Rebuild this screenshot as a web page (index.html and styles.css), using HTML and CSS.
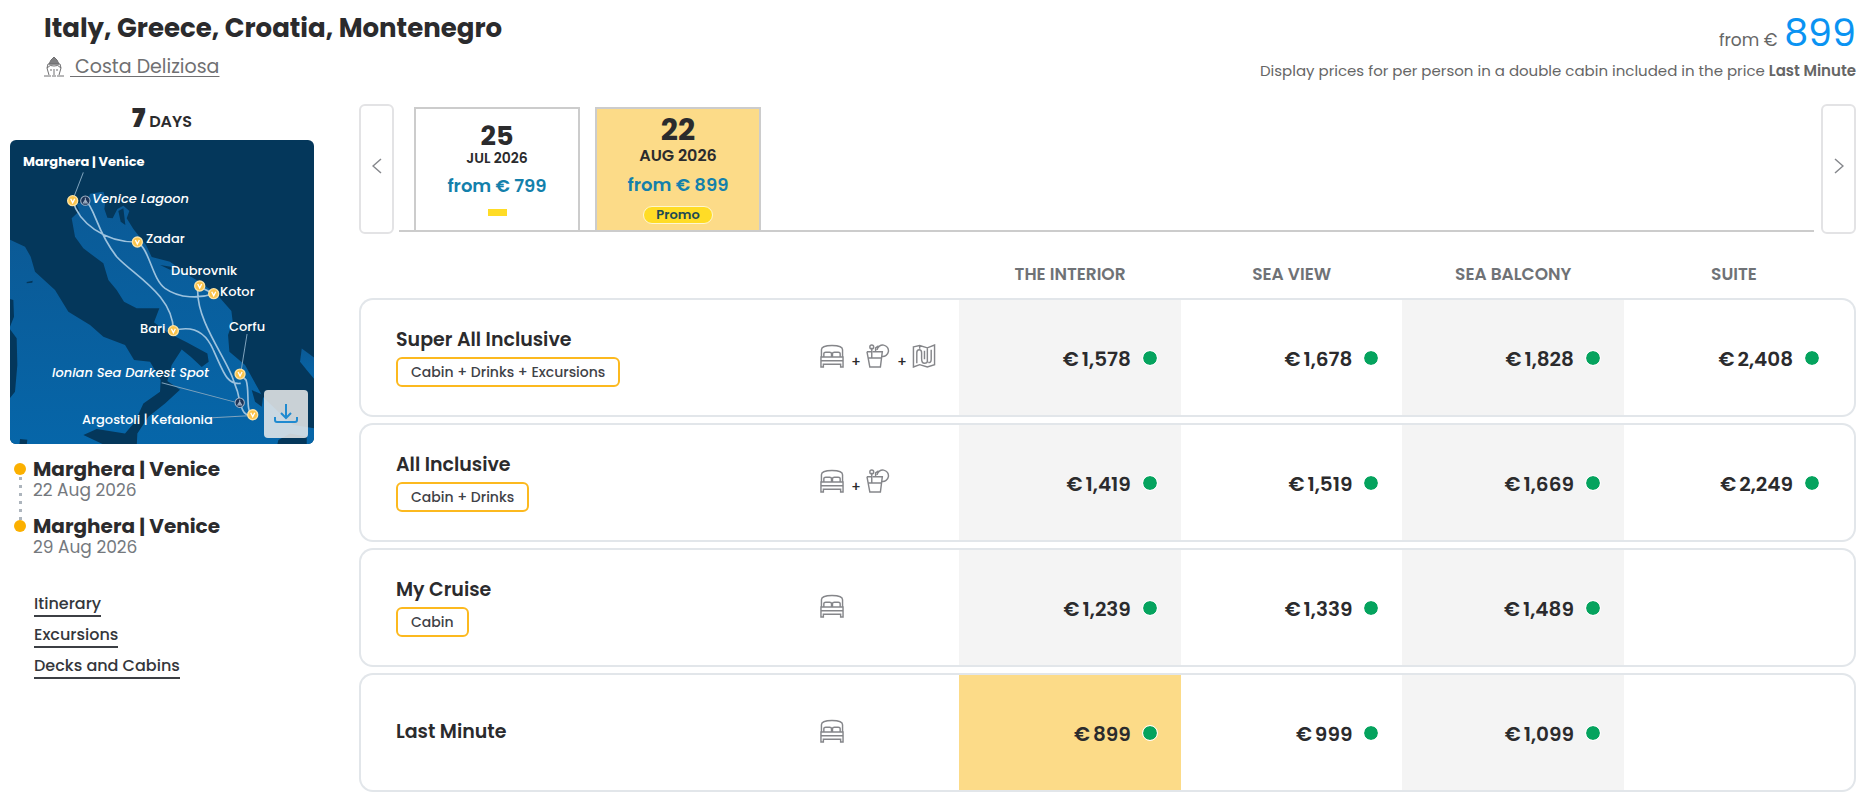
FILE: index.html
```html
<!DOCTYPE html>
<html lang="en">
<head>
  <meta charset="UTF-8" />
  <title>Italy, Greece, Croatia, Montenegro - Costa Deliziosa</title>
  <meta name="viewport" content="width=device-width, initial-scale=1.0" />
  <link rel="stylesheet" href="styles.css">
</head>
<body>

  <!-- Shared icons -->
  <svg class="sprite" aria-hidden="true">
    <symbol id="icon-bed" viewBox="0 0 25 25">
      <path d="M1.5 13V6C1.5 2.5 6 1.5 12.5 1.5S23.5 2.5 23.5 6V13M4 13V10Q4 8.500 6 8.500H10Q12 8.500 12 10V13M13 13V10Q13 8.500 15 8.500H19Q21 8.500 21 10V13M1 13.5H24V24H21.5V21H3.5V24H1ZM1 17.5H24"/>
    </symbol>
    <symbol id="icon-drink" viewBox="0 0 25 25">
      <path d="M1 8H6M7 8H17L15 24H4L1 8M2.500 14.5H16M6 14V4M10 8V4L13 2M4 3A2 2 0 1 0 8 3A2 2 0 1 0 4 3M11.5 6A6 6 0 1 1 16.5 13"/>
    </symbol>
    <symbol id="icon-map" viewBox="0 0 25 25">
      <path d="M1.5 3L8 1.5L16 4L23.5 1V21.5L16 24L8 21.5L1.5 24ZM8 2V5M16 4V18M5 20V9Q5 6 7.500 6T10 9V15Q10 20 13 20T16 18M20 6V16Q20 20 17 19M13 7V16"/>
    </symbol>
  </svg>

  <header class="header">
    <div>
      <h1 class="title">Italy, Greece, Croatia, Montenegro</h1>
      <div class="ship">
        <svg class="ship-icon" viewBox="0 0 20 20" aria-hidden="true">
          <path class="ship-top" d="M5 7L7 3L10 0L13 3L15 7Z"/>
          <path d="M3 11L4 7H16L17 11M3 11Q6 7 10 9Q14 7 17 11L15 18M3 11L5 18M7 12V14M13 12V14M10 12V18M0 19H7M8 19H12M13 19H20"/>
        </svg>
        <a href="#ship">&nbsp;Costa Deliziosa</a>
      </div>
    </div>
    <div class="from">
      <div class="from-price">from € <span>899</span></div>
      <div class="from-note">Display prices for per person in a double cabin included in the price <b>Last Minute</b></div>
    </div>
  </header>

  <div class="content">

    <!-- Left: itinerary map, ports, links -->
    <aside class="side">
      <div class="days"><b>7</b> DAYS</div>

      <div class="map">
        <svg class="map-image" viewBox="0 0 304 304" role="img" aria-label="Itinerary map">
          <defs>
            <linearGradient id="water" x1="0" y1="0" x2="0" y2="1">
              <stop offset="0" stop-color="#0b5a96"/>
              <stop offset="1" stop-color="#0666a9"/>
            </linearGradient>
          </defs>
          <g transform="translate(-10 -5) scale(.3334)">
            <g fill="url(#water)">
              <path d="M215 250L238 228L228 205L262 200L270 176L310 170L317 190L313 222L322 248L338 250L352 222L370 212L388 228L380 250L400 282L438 330L455 366L510 380L560 418L598 440L650 478L694 528L698 560L684 600L688 650L735 690L760 735L788 785L835 830L880 870L945 880V935H410L412 895L445 845L495 805L540 764L502 738L515 690L545 643L572 665L605 696L626 680L622 655L560 622L500 592L462 562L478 520L410 520L372 500L350 465L325 435L310 385L250 340L225 305Z"/>
              <path d="M25 312L75 335L92 365L105 410L165 465L205 530L270 570L310 605L375 630L402 675L450 680L482 735L480 770L430 805L405 860L375 895L290 882L250 900L325 935H25Z"/>
              <path d="M905 640L945 670V735L920 705L900 680Z"/>
            </g>
            <g fill="#04375b">
              <path d="M25 490L40 495L42 545L28 580L50 610L52 690L45 770L25 795Z"/>
              <path d="M60 912L82 914L80 930H58ZM755 765L790 780L785 815L765 800ZM835 915L870 895L920 905V935H830ZM480 390L540 400L510 404ZM355 228L370 220L376 270L362 260Z"/>
              <path d="M80 441L98 437L97 443L80 445Z"/>
            </g>
            <path class="route" d="M218 196C235 260 310 322 412 321C450 345 455 430 495 460C540 492 600 490 641 476L598 455M257 196C285 220 290 290 350 365C400 420 520 480 520 587C560 575 610 575 640 645C670 710 680 750 722 745M593 465C590 560 680 670 700 735C715 770 718 790 720 803C728 830 735 845 758 840C735 830 750 770 738 735L720 717"/>
            <path class="pointer" d="M250 112L222 185M741 597L724 702M485 743L708 802M637 848L745 842"/>
            <g class="stop">
              <circle cx="218" cy="197" r="15"/><circle cx="412" cy="321" r="15"/><circle cx="599" cy="453" r="15"/><circle cx="641" cy="476" r="15"/>
              <circle cx="520" cy="587" r="15"/><circle cx="720" cy="717" r="15"/><circle cx="758" cy="839" r="15"/>
            </g>
            <path class="stop-mark" d="M212 191L218 203L224 191M406 315L412 327L418 315M593 447L599 459L605 447M635 470L641 482L647 470M514 581L520 593L526 581M714 711L720 723L726 711M752 833L758 845L764 833"/>
            <g class="sight">
              <circle cx="256" cy="197" r="14"/><circle cx="719" cy="803" r="14"/>
              <path d="M256 188V204M250 204H262L256 194ZM719 794V810M713 810H725L719 800Z"/>
            </g>
          </g>
          <g class="map-label">
            <text class="port" x="13" y="26">Marghera | Venice</text>
            <text class="sea" x="82" y="63">Venice Lagoon</text>
            <text x="136" y="103">Zadar</text>
            <text x="161" y="135">Dubrovnik</text>
            <text x="210" y="156">Kotor</text>
            <text x="130" y="193">Bari</text>
            <text x="219" y="191">Corfu</text>
            <text class="sea" x="42" y="237">Ionian Sea Darkest Spot</text>
            <text x="72" y="284">Argostoli | Kefalonia</text>
          </g>
        </svg>
        <button class="download" aria-label="Download map">
          <svg viewBox="0 0 24 24" aria-hidden="true"><path d="M12 2V16M7 11L12 16L17 11M1 15V18Q1 20 3 20H21Q23 20 23 18V15"/></svg>
        </button>
      </div>

      <ul class="ports">
        <li><b>Marghera | Venice</b><span>22 Aug 2026</span></li>
        <li><b>Marghera | Venice</b><span>29 Aug 2026</span></li>
      </ul>

      <nav class="links">
        <a href="#itinerary">Itinerary</a>
        <a href="#excursions">Excursions</a>
        <a href="#decks">Decks and Cabins</a>
      </nav>
    </aside>

    <!-- Right: departures and prices -->
    <main class="main">
      <div class="dates">
        <button class="arrow" aria-label="Previous dates"><svg viewBox="0 0 10 16" aria-hidden="true"><path d="M9 1L1 8L9 15"/></svg></button>
        <div class="date-list">
          <button class="date">
            <span class="day">25</span>
            <span class="month">JUL 2026</span>
            <span class="price-from">from € 799</span>
            <span class="dash"></span>
          </button>
          <button class="date active">
            <span class="day">22</span>
            <span class="month">AUG 2026</span>
            <span class="price-from">from € 899</span>
            <span class="promo">Promo</span>
          </button>
        </div>
        <button class="arrow" aria-label="Next dates"><svg viewBox="0 0 10 16" aria-hidden="true"><path d="M1 1L9 8L1 15"/></svg></button>
      </div>

      <table class="prices">
        <thead>
          <tr>
            <td class="col-name"></td>
            <td class="col-icons"></td>
            <th scope="col">THE INTERIOR</th>
            <th scope="col">SEA VIEW</th>
            <th scope="col">SEA BALCONY</th>
            <th scope="col" class="col-last">SUITE</th>
          </tr>
        </thead>
        <tbody>
          <tr>
            <th scope="row">Super All Inclusive<br><span class="tag">Cabin + Drinks + Excursions</span></th>
            <td class="icons"><div><svg><use href="#icon-bed"/></svg><i>+</i><svg><use href="#icon-drink"/></svg><i>+</i><svg><use href="#icon-map"/></svg></div></td>
            <td class="price"><span>€</span>1,578</td>
            <td class="price"><span>€</span>1,678</td>
            <td class="price"><span>€</span>1,828</td>
            <td class="price"><span>€</span>2,408</td>
          </tr>
          <tr>
            <th scope="row">All Inclusive<br><span class="tag">Cabin + Drinks</span></th>
            <td class="icons"><div><svg><use href="#icon-bed"/></svg><i>+</i><svg><use href="#icon-drink"/></svg></div></td>
            <td class="price"><span>€</span>1,419</td>
            <td class="price"><span>€</span>1,519</td>
            <td class="price"><span>€</span>1,669</td>
            <td class="price"><span>€</span>2,249</td>
          </tr>
          <tr>
            <th scope="row">My Cruise<br><span class="tag">Cabin</span></th>
            <td class="icons"><div><svg><use href="#icon-bed"/></svg></div></td>
            <td class="price"><span>€</span>1,239</td>
            <td class="price"><span>€</span>1,339</td>
            <td class="price"><span>€</span>1,489</td>
            <td></td>
          </tr>
          <tr>
            <th scope="row">Last Minute</th>
            <td class="icons"><div><svg><use href="#icon-bed"/></svg></div></td>
            <td class="price best"><span>€</span>899</td>
            <td class="price"><span>€</span>999</td>
            <td class="price"><span>€</span>1,099</td>
            <td></td>
          </tr>
        </tbody>
      </table>
    </main>

  </div>

</body>
</html>
```
FILE: styles.css
```css
* {
  box-sizing: border-box;
}

body {
  margin: 0;
  padding: 12px 14px 2px 10px;
  background: #fff;
  color: #2b2b2d;
  font-family: Poppins, Inter, sans-serif;
}

button {
  font-family: inherit;
  color: inherit;
  cursor: pointer;
}

.sprite {
  display: none;
}

.header {
  display: flex;
  justify-content: space-between;
  padding-left: 34px;
}

.title {
  margin: 0;
  font-size: 26px;
  line-height: 32px;
  font-weight: 700;
}

.ship {
  display: flex;
  align-items: center;
  gap: 6px;
  margin-top: 9px;
  font-size: 19px;
  line-height: 28px;
}

.ship a {
  color: #707072;
  text-underline-offset: 3px;
}

.ship-icon {
  width: 20px;
  height: 20px;
  fill: none;
  stroke: #707072;
}

.ship-top {
  fill: #808082;
}

.from {
  text-align: right;
  color: #666;
}

.from-price {
  font-size: 17px;
  line-height: 28px;
}

.from-price span {
  margin-left: 2px;
  font-size: 38px;
  line-height: 42px;
  color: #0a93f2;
}

.from-note {
  margin-top: 6px;
  font-size: 15px;
  line-height: 22px;
}

.from-note b {
  font-weight: 600;
}

.content {
  display: flex;
  gap: 45px;
  margin-top: 22px;
}

/* side column */
.side {
  flex: 0 0 304px;
}

.days {
  font-size: 16px;
  line-height: 36px;
  font-weight: 600;
  text-align: center;
}

.days b {
  font-size: 26px;
  line-height: 28px;
}

.map {
  position: relative;
}

.map-image {
  display: block;
  width: 100%;
  border-radius: 6px;
  background: #04375b;
}

.route {
  fill: none;
  stroke: #9cc2de;
  stroke-width: 5;
}

.pointer {
  fill: none;
  stroke: #7fa3bd;
  stroke-width: 3;
}

.stop {
  fill: #fbc44b;
  stroke: #fde3a4;
  stroke-width: 4;
}

.stop-mark {
  fill: none;
  stroke: #fff;
  stroke-width: 4;
}

.sight {
  fill: #1c3357;
  stroke: #a5b5c8;
  stroke-width: 3;
}

.map-label {
  fill: #fff;
  font-size: 13px;
  font-weight: 500;
}

.map-label .port {
  font-weight: 700;
}

.map-label .sea {
  font-style: italic;
}

.download {
  position: absolute;
  right: 6px;
  bottom: 6px;
  width: 44px;
  height: 48px;
  padding: 10px;
  border: 0;
  border-radius: 4px;
  background: rgba(236, 236, 236, 0.85);
}

.download svg {
  display: block;
  fill: none;
  stroke: #1f8ad0;
  stroke-width: 2;
}

.ports {
  margin: 13px 0 0;
  padding: 0 0 0 23px;
  list-style: none;
}

.ports li {
  position: relative;
  height: 57px;
}

.ports li::before {
  content: "";
  position: absolute;
  left: -19px;
  top: 6px;
  width: 12px;
  height: 12px;
  border-radius: 50%;
  background: #fbb000;
}

.ports li:first-child::after {
  content: "";
  position: absolute;
  left: -14px;
  top: 20px;
  width: 3px;
  height: 43px;
  background: repeating-linear-gradient(#adb5bd 0 3px, transparent 3px 8px);
}

.ports b {
  display: block;
  font-size: 20px;
  line-height: 24px;
  font-weight: 700;
}

.ports span {
  display: block;
  font-size: 17px;
  line-height: 18px;
  color: #75797e;
}

.links {
  display: flex;
  flex-direction: column;
  align-items: flex-start;
  gap: 7px;
  margin-top: 22px;
  padding-left: 24px;
}

.links a {
  border-bottom: 2px solid #3c3f44;
  color: #34373c;
  font-size: 16px;
  line-height: 22px;
  font-weight: 500;
  text-decoration: none;
}

/* departures */
.main {
  flex: 1;
  min-width: 0;
}

.dates {
  display: flex;
  gap: 5px;
}

.arrow {
  flex: 0 0 35px;
  height: 130px;
  padding: 0;
  border: 2px solid #e3e3e5;
  border-radius: 6px;
  background: #fff;
}

.arrow svg {
  width: 10px;
  height: 16px;
  fill: none;
  stroke: #85878c;
  stroke-width: 1.5;
}

.date-list {
  flex: 1;
  display: flex;
  gap: 15px;
  margin: 3px 2px 2px 0;
  padding-left: 15px;
  border-bottom: 2px solid #ccc;
}

.date {
  display: flex;
  flex-direction: column;
  align-items: center;
  width: 166px;
  padding: 14px 0 0;
  border: 2px solid #ccc;
  border-bottom: 0;
  background: #fff;
}

.date.active {
  padding-top: 8px;
  background: #fcdb88;
}

.day {
  font-size: 27px;
  line-height: 26px;
  font-weight: 700;
}

.active .day {
  font-size: 30px;
}

.month {
  font-size: 14px;
  line-height: 18px;
  font-weight: 600;
}

.active .month {
  font-size: 16px;
  line-height: 26px;
}

.price-from {
  margin-top: 7px;
  color: #1380ab;
  font-size: 18px;
  line-height: 24px;
  font-weight: 600;
}

.active .price-from {
  margin-top: 4px;
}

.dash {
  width: 19px;
  height: 7px;
  margin-top: 11px;
  background: #ffdc26;
}

.promo {
  margin-top: 9px;
  padding: 0 12px;
  border: 1px solid #fff6d0;
  border-radius: 9px;
  background: #ffdc26;
  color: #1d4a54;
  font-size: 13px;
  line-height: 16px;
  font-weight: 600;
}

/* price table */
.prices {
  width: 100%;
  margin-top: 12px;
  border-spacing: 0 6px;
  table-layout: fixed;
}

.prices td,
.prices th {
  padding: 0;
}

.col-icons {
  width: 9.3%;
}

thead th {
  width: 14.8%;
  height: 40px;
  color: #6f7276;
  font-size: 17px;
  font-weight: 600;
}

.prices thead th {
  padding-top: 3px;
}

.prices thead .col-last {
  width: 15.5%;
  padding-right: 12px;
}

tbody td,
tbody th {
  height: 119px;
  border: solid #e2e6ea;
  border-width: 2px 0;
}

tbody th {
  border-left-width: 2px;
  border-radius: 14px 0 0 14px;
  font-size: 19px;
  line-height: 28px;
  font-weight: 600;
  text-align: left;
}

.prices tbody th {
  padding: 0 0 2px 35px;
}

tbody td:last-child {
  border-right-width: 2px;
  border-radius: 0 14px 14px 0;
}

tbody td:nth-child(odd) {
  background: #f4f4f4;
}

.tag {
  display: inline-block;
  margin-top: 3px;
  padding: 0 13px;
  border: 2px solid #fcb91f;
  border-radius: 6px;
  color: #3f4247;
  font-size: 14px;
  line-height: 26px;
  font-weight: 500;
  vertical-align: top;
}

.prices .icons {
  padding-bottom: 4px;
}

.icons div {
  display: flex;
  align-items: center;
  gap: 7px;
}

.icons svg {
  width: 24px;
  height: 24px;
  fill: none;
  stroke: #85868a;
  stroke-width: 1.5;
}

.icons i {
  width: 8px;
  font-size: 14px;
  line-height: 12px;
  font-style: normal;
  font-weight: 500;
  align-self: flex-end;
}

.price {
  text-align: right;
  font-size: 20px;
  font-weight: 600;
}

.prices .price {
  padding: 2px 23px 0 0;
}

.prices .price:last-child {
  padding-right: 34px;
}

.price span {
  margin-right: 3px;
}

.price::after {
  content: "";
  display: inline-block;
  width: 14px;
  height: 14px;
  margin-left: 11px;
  border: 1px solid #fff;
  border-radius: 50%;
  background: #05a35e padding-box;
}

tbody td.best {
  background: #fcdb88;
}
```
